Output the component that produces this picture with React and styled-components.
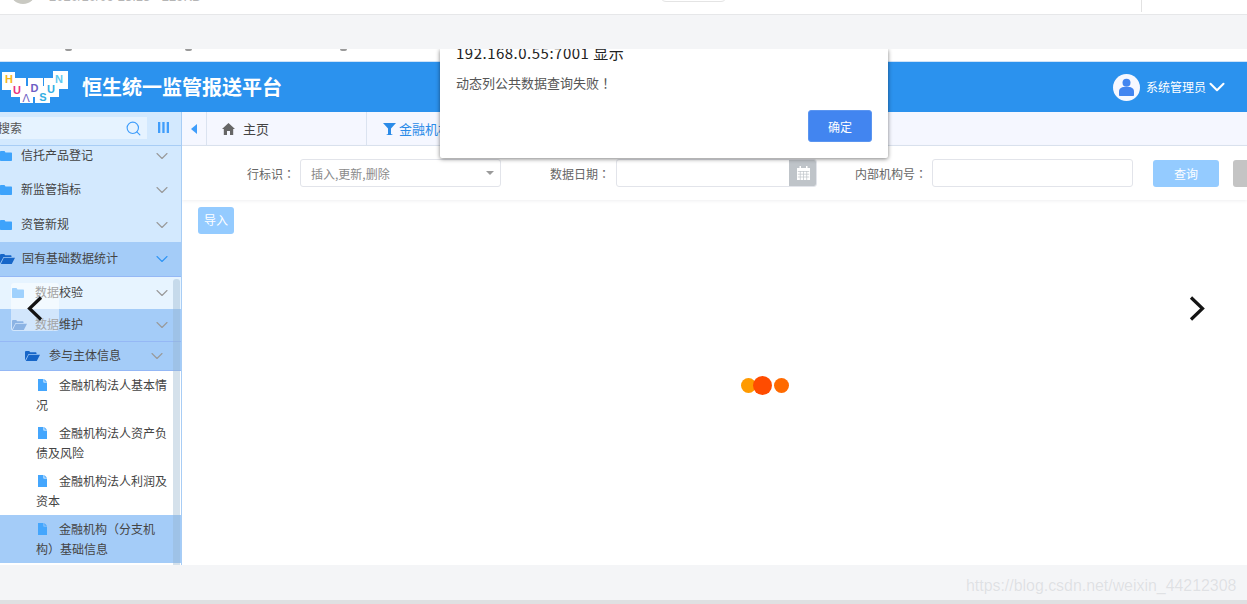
import React from "react"
import styled, { createGlobalStyle } from "styled-components"
import { ChevronDown, Search } from "lucide-react"

const GlobalStyle = createGlobalStyle`
  html, body {
    margin: 0;
    padding: 0;
    background: #fff;
    overflow: hidden;
  }
  * {
    box-sizing: border-box;
  }
  body {
    font-family: "Noto Sans CJK SC", "Liberation Sans", sans-serif;
    font-size: 12px;
    color: #444;
  }
`

const Page = styled.div`
  position: relative;
  width: 1247px;
  height: 604px;
  overflow: hidden;
  display: flex;
  flex-direction: column;
  background: #f4f5f7;
`

const Punct = styled.span`
  font-family: "Noto Sans CJK TC", sans-serif;
`

const BrowserTop = styled.div`
  height: 15px;
  flex: none;
  background: #fff;
  border-bottom: 1px solid #e6e7e9;
  display: flex;
  overflow: hidden;
`

const Avatar = styled.div`
  width: 26px;
  height: 26px;
  margin: -22px 0 0 10px;
  border-radius: 50%;
  background: #c9c9c2;
`

const FileMeta = styled.div`
  margin: -12px 0 0 13px;
  width: 611px;
  font: 13px/17px "Liberation Sans", sans-serif;
  color: #b5b5b5;
`

const Pill = styled.div`
  width: 67px;
  height: 12px;
  margin-top: -10px;
  border: 1px solid #e4e4e4;
  border-radius: 6px;
`

const TopDivider = styled.div`
  width: 1px;
  height: 12px;
  margin-left: 414px;
  background: #e2e2e2;
`

const GrayBand = styled.div`
  height: 34px;
  flex: none;
  background: #f4f5f7;
`

const AppFrame = styled.div`
  position: relative;
  height: 516px;
  flex: none;
  background: #fff;
  overflow: hidden;
  display: flex;
  flex-direction: column;
`

const ClippedMarks = styled.div`
  height: 12px;
  flex: none;
  display: flex;
  align-items: flex-start;
  padding-left: 65px;
`

const Mark = styled.span`
  width: 7px;
  height: 2px;
  margin-right: ${p => p.$gap}px;
  background: #9a9a9a;
  border-radius: 0 0 3px 3px;
`

const Header = styled.header`
  height: 51px;
  flex: none;
  border-top: 1px solid #cfe3f8;
  background: #2b92ee;
  display: flex;
  align-items: center;
  padding: 0 17px 0 2px;
  color: #fff;
`

const Title = styled.h1`
  margin: 0 0 0 14px;
  font-size: 20px;
  line-height: 28px;
  font-weight: 700;
  flex: 1;
`

const UserName = styled.span`
  margin: -2px 0 0 6px;
  font-size: 12px;
`

const Body = styled.div`
  flex: 1;
  min-height: 0;
  display: flex;
`

const Sidebar = styled.aside`
  position: relative;
  width: 182px;
  flex: none;
  background: #d3e9fe;
  border-right: 1px solid #a8cdf5;
  display: flex;
  flex-direction: column;
  overflow: hidden;
`

const SearchBar = styled.div`
  height: 34px;
  flex: none;
  display: flex;
  align-items: flex-start;
  padding-top: 5px;
  border-bottom: 1px solid #a8cdf5;
`

const SearchField = styled.div`
  width: 147px;
  height: 22px;
  background: #e6f3ff;
  display: flex;
  align-items: center;
  justify-content: space-between;
  padding-right: 5px;
  color: #555;
`

const SearchHint = styled.span`
  margin: 0 0 2px -2px;
`

const ColumnsIcon = styled.svg`
  width: 11px;
  height: 11px;
  margin: 5px 0 0 11px;
`

const Row = styled.div`
  height: ${p => p.$h}px;
  flex: none;
  display: flex;
  align-items: center;
  padding-left: ${p => p.$indent}px;
  padding-right: ${p => (p.$inner ? 14 : 9)}px;
  padding-bottom: ${p => p.$under || 0}px;
  background: ${p => p.$bg || "transparent"};
  border-bottom: ${p => (p.$line ? "1px solid #95b8f5" : "none")};
  color: #444;
`

const RowLabel = styled.span`
  flex: 1;
  margin-left: ${p => p.$gap}px;
  margin-bottom: 3px;
`

const Leaf = styled.div`
  flex: none;
  height: 48px;
  padding: 4px 13px 0 36px;
  background: ${p => (p.$active ? "#a4ccf8" : "#fff")};
  line-height: 20px;
  color: #444;
`

const LeafIcon = styled.svg`
  display: inline-block;
  width: 9px;
  height: 12px;
  margin: 0 12px 0 2px;
  vertical-align: -1px;
`

const SidebarTail = styled.div`
  flex: 1;
  background: #fff;
`

const Scrollbar = styled.div`
  position: absolute;
  right: 1px;
  top: 167px;
  bottom: 0;
  width: 7px;
  border-radius: 3px 3px 0 0;
  background: rgba(150, 180, 205, 0.4);
`

const Main = styled.main`
  flex: 1;
  min-width: 0;
  display: flex;
  flex-direction: column;
`

const TabBar = styled.nav`
  height: 34px;
  flex: none;
  display: flex;
  background: #f5f7ff;
  border-bottom: 1px solid #dbe3f0;
  font-size: 13px;
`

const TabToggle = styled.div`
  width: 25px;
  display: flex;
  align-items: center;
  justify-content: center;
  border-right: 1px solid #dbe3f0;
`

const Tab = styled.div`
  width: ${p => p.$w}px;
  display: flex;
  align-items: center;
  gap: ${p => p.$gap}px;
  padding-left: ${p => p.$pad}px;
  border-right: ${p => (p.$open ? "none" : "1px solid #dbe3f0")};
  color: ${p => (p.$open ? "#2b8be8" : "#444")};
`

const Filters = styled.form`
  height: 54px;
  flex: none;
  display: flex;
  align-items: center;
  box-shadow: 0 1px 3px rgba(190, 190, 200, 0.25);
`

const FieldLabel = styled.label`
  margin-left: ${p => p.$left}px;
  margin-right: ${p => p.$right}px;
  color: #666;
  white-space: nowrap;
`

const FieldBox = styled.div`
  width: 201px;
  height: 28px;
  flex: none;
  border: 1px solid #e2e4ea;
  border-radius: 3px;
  display: flex;
  align-items: center;
  justify-content: space-between;
  padding-left: 10px;
  color: #8a8a8a;
  overflow: hidden;
`

const SelectCaret = styled.i`
  width: 0;
  height: 0;
  margin-right: 6px;
  border-left: 4px solid transparent;
  border-right: 4px solid transparent;
  border-top: 4px solid #9a9a9a;
`

const DateAddon = styled.span`
  width: 28px;
  height: 28px;
  margin-right: -1px;
  background: #bfc4c9;
  display: flex;
  align-items: center;
  justify-content: center;
`

const FilterButton = styled.button`
  flex: none;
  width: 66px;
  height: 27px;
  margin-left: ${p => p.$left}px;
  padding: 0;
  border: none;
  border-radius: 3px;
  background: ${p => p.$bg};
  color: #fff;
  font: inherit;
`

const Content = styled.section`
  position: relative;
  flex: 1;
  padding: 7px 16px;
`

const ImportButton = styled.button`
  display: block;
  width: 36px;
  height: 27px;
  padding: 0 0 2px;
  border: none;
  border-radius: 3px;
  background: #94cbff;
  color: #fff;
  font: inherit;
`

const Loader = styled.div`
  position: absolute;
  left: 559px;
  top: 176px;
  display: flex;
  align-items: center;
`

const Dot = styled.span`
  width: ${p => p.$size}px;
  height: ${p => p.$size}px;
  margin-left: ${p => p.$ml}px;
  border-radius: 50%;
  background: ${p => p.$color};
`

const Dialog = styled.div`
  position: absolute;
  left: 440px;
  top: 0;
  width: 448px;
  height: 109px;
  background: #fff;
  border-radius: 0 0 2px 2px;
  box-shadow: 0 1px 4px rgba(0, 0, 0, 0.5);
  padding: 0 16px;
  overflow: hidden;
`

const DialogTitle = styled.div`
  margin-top: -5px;
  font-size: 15px;
  line-height: 18px;
  letter-spacing: 0.5px;
  color: #222;
`

const DialogText = styled.p`
  margin: 12px 0 0;
  font-size: 13px;
  line-height: 18px;
  color: #555;
`

const DialogActions = styled.div`
  display: flex;
  justify-content: flex-end;
  margin-top: 18px;
`

const DialogButton = styled.button`
  width: 64px;
  height: 32px;
  padding: 0;
  border: 1px solid #5b95f0;
  border-radius: 3px;
  background: #4285f0;
  color: #fff;
  font: inherit;
`

const SlideArrow = styled.div`
  position: absolute;
  top: 234px;
  width: 48px;
  height: 48px;
  display: flex;
  align-items: center;
  justify-content: center;
  padding-top: 3px;
  border-radius: 3px;
  left: ${p => p.$left}px;
  background: ${p => p.$bg};
`

const Watermark = styled.div`
  position: absolute;
  left: 966px;
  top: 576px;
  font: 15.9px/20px "Liberation Sans", sans-serif;
  color: #dfe1e4;
  text-shadow: 0 0 1px #fff;
`

const Footer = styled.div`
  flex: 1;
  background: #f4f5f7;
  border-bottom: 4px solid #dfe0e2;
`

const Logo = () => (
  <svg width="66" height="34" viewBox="0 0 66 34">
    <g fill="#fff">
      <rect x="0" y="2" width="13" height="18" />
      <rect x="9" y="8" width="15" height="19" />
      <rect x="18" y="16" width="13" height="17" />
      <rect x="26" y="8" width="15" height="19" />
      <rect x="33" y="16" width="15" height="17" />
      <rect x="42" y="8" width="15" height="19" />
      <rect x="51" y="1" width="15" height="18" />
    </g>
    <g fontFamily="Liberation Sans, sans-serif" fontSize="11" fontWeight="700" textAnchor="middle">
      <text x="7" y="13" fill="#f7b519">H</text>
      <text x="15" y="23.500" fill="#e8337f">U</text>
      <text x="24" y="31.500" fill="#6d5ec4" fontWeight="400" transform="rotate(180 24 27.500)">V</text>
      <text x="32.500" y="22" fill="#6d5ec4">D</text>
      <text x="41" y="31" fill="#33aee3">S</text>
      <text x="49" y="23" fill="#33aee3">U</text>
      <text x="57" y="12.500" fill="#5fc9f0">N</text>
    </g>
  </svg>
)

const UserIcon = () => (
  <svg width="27" height="27" viewBox="0 0 27 27">
    <circle cx="13.500" cy="13.500" r="13.500" fill="#f6f8ff" />
    <circle cx="13.500" cy="8.800" r="4" fill="#4285f0" />
    <path d="M6 21v-3.500C6 14.500 8.500 13 11 13h5c2.500 0 5 1.500 5 4.500V21c0 .6-.4 1-1 1H7c-.6 0-1-.4-1-1z" fill="#4285f0" />
  </svg>
)

const FolderIcon = ({ open, color, size = 12 }) => (
  <svg width={open ? size + 3 : size} height="10" viewBox={open ? "0 0 15 10" : "0 0 12 10"} style={{ flex: "none" }}>
    {open ? (
      <path d="M0 9.500V1.200C0 .5.500 0 1.200 0h3l1 1.300h5.300c.6 0 1 .4 1 1V3H3.500L0 9.500zM3.800 3.800H15L11.800 10H.8z" fill={color} />
    ) : (
      <path d="M0 1c0-.6.400-1 1-1h3.500l1 1.500H11c.6 0 1 .4 1 1V9c0 .6-.4 1-1 1H1c-.6 0-1-.4-1-1z" fill={color} />
    )}
  </svg>
)

const PageIcon = () => (
  <LeafIcon viewBox="0 0 9 12">
    <path d="M0 0h5.500v3.500H9V12H0z" fill="#44a6fd" />
    <path d="M6.300 0L9 2.700H6.300z" fill="#44a6fd" />
  </LeafIcon>
)

const HomeIcon = () => (
  <svg width="13" height="12" viewBox="0 0 13 12">
    <path d="M6.500 0L13 6h-1.800v6H8V8H5v4H1.800V6H0z" fill="#666" />
  </svg>
)

const FunnelIcon = () => (
  <svg width="13" height="12" viewBox="0 0 13 12">
    <path d="M0 0h13L8 5.500V11l2 1H3l2-1V5.500z" fill="#2b8be8" />
  </svg>
)

const CalendarIcon = () => (
  <svg width="13" height="14" viewBox="0 0 13 14">
    <path d="M0 2h2.500V0h1.500v2h5V0h1.500v2H13v12H0z" fill="#fff" />
    <path d="M.8 5.500h11.400M.8 8.200h11.400M.8 11h11.400M3.300 5v9M6.500 5v9M9.700 5v9" stroke="#bfc4c9" strokeWidth=".7" />
  </svg>
)

const Chevron = ({ color = "#999" }) => (
  <ChevronDown size={20} color={color} strokeWidth={1.3} style={{ flex: "none" }} />
)

const ArrowIcon = ({ flip }) => (
  <svg width="16" height="25" viewBox="0 0 16 25" style={flip ? { transform: "scaleX(-1)" } : undefined}>
    <path d="M14 1.500L2.500 12.500L14 23.500" fill="none" stroke="#141414" strokeWidth="3.200" />
  </svg>
)

const leaves = [
  { name: "金融机构法人基本情况" },
  { name: "金融机构法人资产负债及风险" },
  { name: "金融机构法人利润及资本" },
  { name: "金融机构（分支机构）基础信息", active: true }
]

class App extends React.Component {
  render() {
    return (
      <Page>
        <GlobalStyle />
        <BrowserTop>
          <Avatar />
          <FileMeta>2020/10/09 23:13 · 229KB</FileMeta>
          <Pill />
          <TopDivider />
        </BrowserTop>
        <GrayBand />
        <AppFrame>
          <ClippedMarks>
            <Mark $gap={113} />
            <Mark $gap={148} />
            <Mark $gap={0} />
          </ClippedMarks>
          <Header>
            <Logo />
            <Title>恒生统一监管报送平台</Title>
            <UserIcon />
            <UserName>系统管理员</UserName>
            <ChevronDown size={26} color="#fff" strokeWidth={1.9} style={{ marginLeft: -2 }} />
          </Header>
          <Body>
            <Sidebar>
              <SearchBar>
                <SearchField>
                  <SearchHint>搜索</SearchHint>
                  <Search size={17} color="#3f9dfb" strokeWidth={1.6} />
                </SearchField>
                <ColumnsIcon viewBox="0 0 11 11">
                  <path d="M0 0h2.300v11H0zM4.300 0h2.300v11H4.300zM8.700 0H11v11H8.700z" fill="#3f9dfb" />
                </ColumnsIcon>
              </SearchBar>
              <Row $h={27} $indent={0} $under={7}>
                <FolderIcon color="#3ea3fb" />
                <RowLabel $gap={9}>信托产品登记</RowLabel>
                <Chevron />
              </Row>
              <Row $h={34} $indent={0}>
                <FolderIcon color="#3ea3fb" />
                <RowLabel $gap={9}>新监管指标</RowLabel>
                <Chevron />
              </Row>
              <Row $h={35} $indent={0}>
                <FolderIcon color="#3ea3fb" />
                <RowLabel $gap={9}>资管新规</RowLabel>
                <Chevron />
              </Row>
              <Row $h={35} $indent={0} $bg="#a4ccf8" $line>
                <FolderIcon open color="#1766c8" />
                <RowLabel $gap={7}>固有基础数据统计</RowLabel>
                <Chevron color="#2f95f5" />
              </Row>
              <Row $h={32} $indent={12} $bg="#e7f4ff">
                <FolderIcon color="#3ea3fb" />
                <RowLabel $gap={11}>数据校验</RowLabel>
                <Chevron />
              </Row>
              <Row $h={33} $indent={12} $bg="#a4ccf8" $line>
                <FolderIcon open color="#1766c8" />
                <RowLabel $gap={8}>数据维护</RowLabel>
                <Chevron />
              </Row>
              <Row $h={29} $indent={25} $bg="#a4ccf8" $line $inner>
                <FolderIcon open color="#1766c8" />
                <RowLabel $gap={9}>参与主体信息</RowLabel>
                <Chevron />
              </Row>
              {leaves.map(l => (
                <Leaf key={l.name} $active={l.active}>
                  <PageIcon />
                  {l.name}
                </Leaf>
              ))}
              <SidebarTail />
              <Scrollbar />
            </Sidebar>
            <Main>
              <TabBar>
                <TabToggle>
                  <svg width="6" height="10" viewBox="0 0 6 10">
                    <path d="M6 0v10L0 5z" fill="#3f9dfb" />
                  </svg>
                </TabToggle>
                <Tab $w={160} $pad={15} $gap={8}>
                  <HomeIcon />
                  主页
                </Tab>
                <Tab $open $w={300} $pad={16} $gap={3}>
                  <FunnelIcon />
                  金融机构
                </Tab>
              </TabBar>
              <Filters>
                <FieldLabel $left={65} $right={5}>行标识<Punct>：</Punct></FieldLabel>
                <FieldBox>
                  插入,更新,删除
                  <SelectCaret />
                </FieldBox>
                <FieldLabel $left={49} $right={6}>数据日期<Punct>：</Punct></FieldLabel>
                <FieldBox>
                  <span />
                  <DateAddon>
                    <CalendarIcon />
                  </DateAddon>
                </FieldBox>
                <FieldLabel $left={38} $right={5}>内部机构号<Punct>：</Punct></FieldLabel>
                <FieldBox />
                <FilterButton type="button" $left={20} $bg="#94cbff">查询</FilterButton>
                <FilterButton type="button" $left={14} $bg="#c4c4c4" />
              </Filters>
              <Content>
                <ImportButton type="button">导入</ImportButton>
                <Loader>
                  <Dot $size={15} $ml={0} $color="#ff9a00" />
                  <Dot $size={19} $ml={-3} $color="#ff4c00" />
                  <Dot $size={15} $ml={2} $color="#ff6a00" />
                </Loader>
              </Content>
            </Main>
          </Body>
          <Dialog>
            <DialogTitle>192.168.0.55:7001 显示</DialogTitle>
            <DialogText>动态列公共数据查询失败<Punct>！</Punct></DialogText>
            <DialogActions>
              <DialogButton type="button">确定</DialogButton>
            </DialogActions>
          </Dialog>
          <SlideArrow $left={11} $bg="rgba(255,255,255,0.5)">
            <ArrowIcon />
          </SlideArrow>
          <SlideArrow $left={1173} $bg="transparent">
            <ArrowIcon flip />
          </SlideArrow>
        </AppFrame>
        <Footer />
        <Watermark>https://blog.csdn.net/weixin_44212308</Watermark>
      </Page>
    )
  }
}

export default App
